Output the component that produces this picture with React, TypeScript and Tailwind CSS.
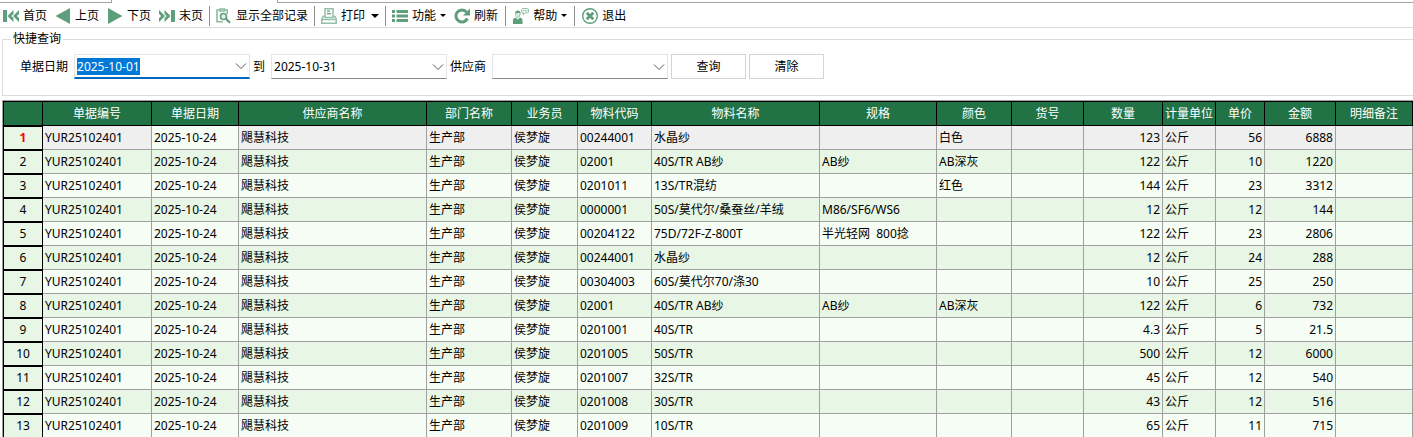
import { ReactNode, useEffect, useRef, useState } from 'react';

type Align = 'left' | 'right';

interface Column {
  key: string;
  title: string;
  width: number;
  align?: Align;
}

const COLUMNS: Column[] = [
  { key: 'billNo', title: '单据编号', width: 109 },
  { key: 'billDate', title: '单据日期', width: 87 },
  { key: 'supplier', title: '供应商名称', width: 188 },
  { key: 'dept', title: '部门名称', width: 85 },
  { key: 'staff', title: '业务员', width: 66 },
  { key: 'code', title: '物料代码', width: 74 },
  { key: 'name', title: '物料名称', width: 168 },
  { key: 'spec', title: '规格', width: 117 },
  { key: 'color', title: '颜色', width: 75 },
  { key: 'itemNo', title: '货号', width: 72 },
  { key: 'qty', title: '数量', width: 79, align: 'right' },
  { key: 'unit', title: '计量单位', width: 53 },
  { key: 'price', title: '单价', width: 49, align: 'right' },
  { key: 'amount', title: '金额', width: 71, align: 'right' },
  { key: 'remark', title: '明细备注', width: 77 },
];

// code, name, spec, color, qty, price, amount
const ITEMS = [
  ['00244001', '水晶纱', '', '白色', '123', '56', '6888'],
  ['02001', '40S/TR AB纱', 'AB纱', 'AB深灰', '122', '10', '1220'],
  ['0201011', '13S/TR混纺', '', '红色', '144', '23', '3312'],
  ['0000001', '50S/莫代尔/桑蚕丝/羊绒', 'M86/SF6/WS6', '', '12', '12', '144'],
  ['00204122', '75D/72F-Z-800T', '半光轻网  800捻', '', '122', '23', '2806'],
  ['00244001', '水晶纱', '', '', '12', '24', '288'],
  ['00304003', '60S/莫代尔70/涤30', '', '', '10', '25', '250'],
  ['02001', '40S/TR AB纱', 'AB纱', 'AB深灰', '122', '6', '732'],
  ['0201001', '40S/TR', '', '', '4.3', '5', '21.5'],
  ['0201005', '50S/TR', '', '', '500', '12', '6000'],
  ['0201007', '32S/TR', '', '', '45', '12', '540'],
  ['0201008', '30S/TR', '', '', '43', '12', '516'],
  ['0201009', '10S/TR', '', '', '65', '11', '715'],
];

const ROWS: Record<string, string>[] = ITEMS.map(([code, name, spec, color, qty, price, amount]) => ({
  billNo: 'YUR25102401',
  billDate: '2025-10-24',
  supplier: '飓慧科技',
  dept: '生产部',
  staff: '侯梦旋',
  code,
  name,
  spec,
  color,
  itemNo: '',
  qty,
  unit: '公斤',
  price,
  amount,
  remark: '',
}));

function Icon({ children }: { children: ReactNode }) {
  return (
    <svg viewBox="0 0 16 16" className="h-4 w-4 shrink-0 fill-[#5f9e7d]" aria-hidden="true">
      {children}
    </svg>
  );
}

const FirstIcon = () => (
  <Icon>
    <path d="M0 2h4v12H0z" />
    <path d="M10.500 2v4L8.300 8l2.200 2v4L4.500 8zM16 2v4l-2.200 2 2.200 2v4l-6-6z" />
  </Icon>
);

const PrevIcon = () => (
  <Icon>
    <path d="M15 0v16L0.500 8z" />
  </Icon>
);

const NextIcon = () => (
  <Icon>
    <path d="M1 0v16l14.500-8z" />
  </Icon>
);

const LastIcon = () => (
  <Icon>
    <path d="M16 2h-4v12h4z" />
    <path d="M5.500 2v4l2.200 2-2.200 2v4l6-6zM0 2v4l2.200 2L0 10v4l6-6z" />
  </Icon>
);

const RecordsIcon = () => (
  <Icon>
    <path
      d="M3.500 2H1v11.800h6M9 2h2.200v4M4 1h4.500v2H4z"
      fill="none"
      stroke="#8dbba3"
      strokeWidth="1.600"
    />
    <circle cx="7.500" cy="8.500" r="3" fill="#e3f0e9" stroke="#5f9e7d" strokeWidth="1.600" />
    <path d="M9 11.200l1.600-1.400 4.200 4.400-1.700 1.400z" />
  </Icon>
);

const PrintIcon = () => (
  <Icon>
    <g fill="none" stroke="#94c0a9" strokeWidth="1.500">
      <path d="M4 9.500V0.800h8v8.700z" />
      <path d="M4 8.500H2L0.800 11v4.200h14.400V11L14 8.500h-2" />
      <path d="M1 11.500h14" />
    </g>
    <path d="M6 2.500h3v1.200H6zM6 5h4v1.200H6z" />
  </Icon>
);

const ListIcon = () => (
  <Icon>
    <path d="M0 2h3v3H0zM4.500 2H16v3H4.500zM0 6.500h3v3H0zM4.500 6.500H16v3H4.500zM0 11h3v3H0zM4.500 11H16v3H4.500z" />
  </Icon>
);

const RefreshIcon = () => (
  <Icon>
    <path d="M13.400 10.500A6 6 0 1 1 12.500 4" fill="none" stroke="#5f9e7d" strokeWidth="3" />
    <path d="M16 0.500v7H9z" />
  </Icon>
);

const HelpIcon = () => (
  <Icon>
    <path d="M0 16v-4q0-2 2.500-2.500L4.800 11.500l2.200-2q2.500 0.500 2.500 2.500v4z" />
    <path d="M1.900 6q0-3.500 2.900-3.500T7.700 6l-0.900-0.800H2.800z" />
    <path d="M2.500 5.500q0 4 2.300 4t2.300-4" fill="#dcece3" stroke="#94c0a9" />
    <path
      d="M9.800 0.600h4.400q1.300 0 1.300 1.200v1.800q0 1.200-1.300 1.200h-2L10.300 6.600V4.800H9.800q-1.100 0-1.100-1.200V1.800q0-1.200 1.100-1.200z"
      fill="none"
      stroke="#8dbba3"
    />
    <path d="M10.200 2.200h1v1h-1zM11.800 2.200h1v1h-1zM13.400 2.200h1v1h-1z" />
  </Icon>
);

const ExitIcon = () => (
  <Icon>
    <circle cx="8" cy="8" r="7.300" fill="none" stroke="#5f9e7d" strokeWidth="1.400" />
    <path d="M4.700 4.700l6.600 6.600M11.300 4.700l-6.600 6.600" stroke="#5f9e7d" strokeWidth="2.800" />
  </Icon>
);

function ToolButton({ icon, label, menu }: { icon: ReactNode; label: string; menu?: boolean }) {
  return (
    <button type="button" className="flex h-full items-center gap-1 hover:bg-[#e5f1ea]">
      {icon}
      <span>{label}</span>
      {menu && <span className="border-x-3 border-t-3 border-x-transparent border-t-black" />}
    </button>
  );
}

function Separator() {
  return <div className="h-5 w-px bg-[#8c8c8c]" />;
}

function Toolbar() {
  return (
    <div className="flex h-[23px] items-center gap-2 pl-[3px] whitespace-nowrap">
      <ToolButton icon={<FirstIcon />} label="首页" />
      <ToolButton icon={<PrevIcon />} label="上页" />
      <ToolButton icon={<NextIcon />} label="下页" />
      <div className="flex h-full items-center gap-1.5">
        <ToolButton icon={<LastIcon />} label="末页" />
        <Separator />
        <ToolButton icon={<RecordsIcon />} label="显示全部记录" />
        <Separator />
        <ToolButton icon={<PrintIcon />} label="打印" />
        <button type="button" aria-label="打印选项" className="flex h-full items-center">
          <span className="border-x-4 border-t-4 border-x-transparent border-t-black" />
        </button>
        <Separator />
        <ToolButton icon={<ListIcon />} label="功能" menu />
      </div>
      <div className="flex h-full items-center gap-[7px]">
        <ToolButton icon={<RefreshIcon />} label="刷新" />
        <Separator />
        <ToolButton icon={<HelpIcon />} label="帮助" menu />
        <Separator />
        <ToolButton icon={<ExitIcon />} label="退出" />
      </div>
    </div>
  );
}

function Chevron() {
  return (
    <svg viewBox="0 0 12 8" className="h-2 w-3 fill-none stroke-[#555]" aria-hidden="true">
      <path d="M1 1.500l5 5 5-5" />
    </svg>
  );
}

interface DateBoxProps {
  id: string;
  value: string;
  onChange: (value: string) => void;
  active?: boolean;
}

function DateBox({ id, value, onChange, active }: DateBoxProps) {
  const ref = useRef<HTMLInputElement>(null);

  useEffect(() => {
    if (active) {
      ref.current?.focus();
      ref.current?.select();
    }
  }, [active]);

  return (
    <div
      className={`flex h-[25px] w-44 items-center border border-[#e5e5e5] bg-white pr-0.5 ${
        active ? 'border-b-2 border-b-[#0067c0]' : 'border-b-[#868686]'
      }`}
    >
      <input
        ref={ref}
        id={id}
        value={value}
        onChange={(e) => onChange(e.target.value)}
        className="h-[17px] min-w-0 flex-1 pl-0.5 leading-[17px] outline-none selection:bg-[#0078d7] selection:text-white"
      />
      <button type="button" aria-label="选择日期" className="flex h-full items-center">
        <Chevron />
      </button>
    </div>
  );
}

function QuickQuery() {
  const [from, setFrom] = useState('2025-10-01');
  const [to, setTo] = useState('2025-10-31');
  const [supplier, setSupplier] = useState('');

  return (
    <fieldset className="ml-0.5 h-[65px] min-w-0 border border-r-0 border-[#dcdcdc] pl-2">
      <legend className="px-0.5 leading-4">快捷查询</legend>
      <div className="flex items-center pt-[7px] pl-[9px] whitespace-nowrap">
        <label htmlFor="date-from" className="mr-1.5">单据日期</label>
        <DateBox id="date-from" value={from} onChange={setFrom} active />
        <label htmlFor="date-to" className="mr-1.5 ml-[3px]">到</label>
        <DateBox id="date-to" value={to} onChange={setTo} />
        <label htmlFor="supplier" className="mr-1.5 ml-[3px]">供应商</label>
        <div className="grid h-[25px] w-44 items-center justify-items-end border border-[#e5e5e5] border-b-[#868686] bg-white">
          <select
            id="supplier"
            value={supplier}
            onChange={(e) => setSupplier(e.target.value)}
            className="col-start-1 row-start-1 h-full w-full appearance-none pl-0.5 outline-none"
          >
            <option value="" />
            <option value="飓慧科技">飓慧科技</option>
          </select>
          <span className="pointer-events-none col-start-1 row-start-1 pr-0.5">
            <Chevron />
          </span>
        </div>
        <button type="button" className="ml-[3px] h-[25px] w-[75px] border border-[#d4d4d4] bg-white">
          查询
        </button>
        <button
          type="button"
          onClick={() => {
            setFrom('');
            setTo('');
            setSupplier('');
          }}
          className="ml-[3px] h-[25px] w-[75px] border border-[#d4d4d4] bg-white"
        >
          清除
        </button>
      </div>
    </fieldset>
  );
}

function DetailGrid() {
  const [current, setCurrent] = useState(0);

  const cellBg = (row: number, key: string) => {
    if (row === current && key !== 'billDate') return 'bg-[#f0eff0]';
    return row % 2 === 0 ? 'bg-[#f5fdf5]' : 'bg-[#e8f6e5]';
  };

  return (
    <div className="mt-1 ml-0.5 min-h-0 flex-1 overflow-hidden border-t border-l border-[#a0a0a0]">
      <table className="w-full table-fixed border-separate border-spacing-0 border-l border-black whitespace-pre">
        <colgroup>
          <col className="w-[39px]" />
          {COLUMNS.map((col) => (
            <col key={col.key} style={{ width: col.width }} />
          ))}
        </colgroup>
        <thead>
          <tr className="h-[25px] bg-[#217346] text-white">
            <th aria-label="行号" className="border-y border-r border-black p-0" />
            {COLUMNS.map((col) => (
              <th key={col.key} scope="col" className="border-y border-r border-black p-0 font-normal">
                {col.title}
              </th>
            ))}
          </tr>
        </thead>
        <tbody>
          {ROWS.map((row, i) => (
            <tr key={i} className="h-6" onClick={() => setCurrent(i)}>
              <th
                scope="row"
                className={`border-y border-r border-black bg-[#e8f6e5] p-0 ${
                  i === current ? 'font-bold text-[#ff0000]' : 'font-normal'
                }`}
              >
                {i + 1}
              </th>
              {COLUMNS.map((col) => (
                <td
                  key={col.key}
                  className={`border-r border-b border-[#a0a0a0] px-0.5 py-0 ${cellBg(i, col.key)} ${
                    col.align === 'right' ? 'text-right' : 'text-left'
                  }`}
                >
                  {row[col.key]}
                </td>
              ))}
            </tr>
          ))}
        </tbody>
      </table>
    </div>
  );
}

export default function App() {
  return (
    <div className="flex h-screen flex-col overflow-hidden bg-white font-['Noto_Sans','Noto_Sans_CJK_SC',sans-serif] text-[12px] leading-4 text-black">
      {/* Bottom edge of the tab strip, open under the active tab */}
      <div className="flex h-[3px] shrink-0">
        <div className="w-28 border-r border-b border-[#a0a0a0]" />
        <div className="w-[165px]" />
        <div className="flex-1 border-b border-l border-[#a0a0a0]" />
      </div>
      <div className="shrink-0 border-b border-[#dcdcdc] pt-px">
        <Toolbar />
      </div>
      <div className="shrink-0 pt-[3px]">
        <QuickQuery />
      </div>
      <DetailGrid />
    </div>
  );
}
